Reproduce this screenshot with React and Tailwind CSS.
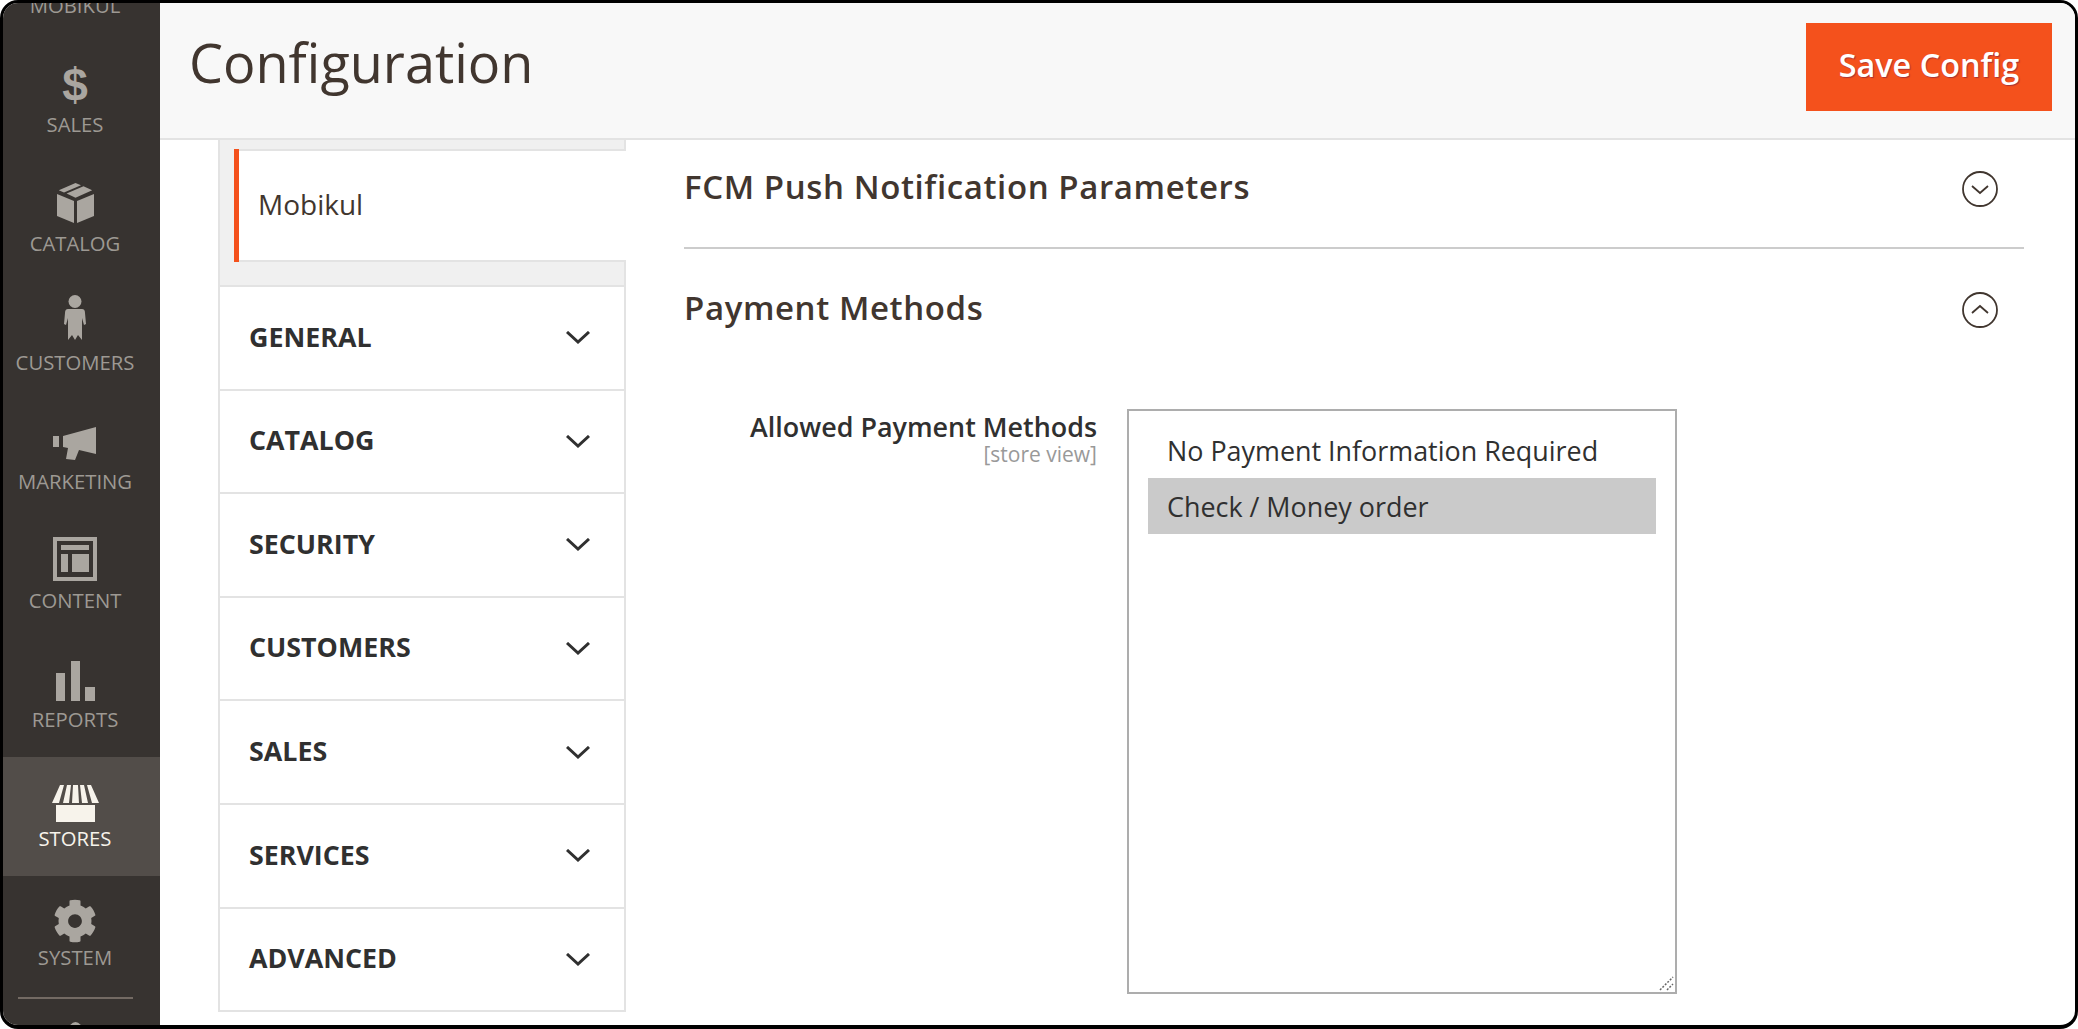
import React from 'react';
import { FaCog } from 'react-icons/fa';

const font = "font-['Open_Sans',sans-serif]";

const BoxIcon = () => (
  <svg width="37" height="40" viewBox="0 0 37 40" fill="currentColor">
    <path d="M0 11 L17 18 V40 L0 33 Z" />
    <path d="M37 11 L20 18 V40 L37 33 Z" />
    <path d="M18.5 0 L24 2.2 L7 9.4 L1.8 7.2 Z" />
    <path d="M26.5 3.2 L35.2 7.2 L18.5 14.8 L9.6 10.6 Z" />
  </svg>
);

const PersonIcon = () => (
  <svg width="22" height="46" viewBox="0 0 22 46" fill="currentColor">
    <circle cx="11" cy="6.5" r="6.5" />
    <path d="M4 14 H18 Q21 14 21 18 L22 29 L20 30 L18 23 L18 45 L14 40 L11 45 L8 40 L4 45 L4 23 L2 30 L0 29 L1 18 Q1 14 4 14 Z" />
  </svg>
);

const MegaphoneIcon = () => (
  <svg width="44" height="35" viewBox="0 0 44 35" fill="currentColor">
    <path d="M0 9 H6 V20 H0 Z" />
    <path d="M10 9 L43 0 V27 L26 23 L22 33 L13 32 L15 21 L10 20 Z" />
  </svg>
);

const ContentIcon = () => (
  <svg width="44" height="44" viewBox="0 0 44 44" fill="currentColor">
    <path fillRule="evenodd" d="M0 0 H44 V44 H0 Z M4 4 V40 H40 V4 Z" />
    <path d="M8 8 H36 V13 H8 Z M8 17 H15 V35 H8 Z M19 17 H36 V35 H19 Z" />
  </svg>
);

const ReportsIcon = () => (
  <svg width="39" height="40" viewBox="0 0 39 40" fill="currentColor">
    <path d="M0 12 H9 V40 H0 Z M15 0 H24 V40 H15 Z M29 26 H39 V40 H29 Z" />
  </svg>
);

const StoresIcon = () => (
  <svg width="47" height="38" viewBox="0 0 47 38" fill="currentColor">
    <path d="M4 20 H43 V37 H4 Z" />
    <path d="M8 0 H12 L7 18 H0 Z M15 0 H19 L17 18 H11 Z M21 0 H26 L27 18 H20 Z M28 0 H32 L36 18 H30 Z M35 0 H39 L47 18 H40 Z" />
  </svg>
);

const sideItems = [
  { label: 'MOBIKUL', icon: null, pad: 'pb-0' },
  { label: 'SALES', icon: <span className="font-['Liberation_Sans',sans-serif] text-[46px] leading-[46px] font-bold">$</span>, pad: 'pb-[3px]' },
  { label: 'CATALOG', icon: <BoxIcon />, pad: 'pb-[7px]' },
  { label: 'CUSTOMERS', icon: <PersonIcon />, pad: 'pb-[8px]' },
  { label: 'MARKETING', icon: <MegaphoneIcon />, pad: 'pb-[6px]' },
  { label: 'CONTENT', icon: <ContentIcon />, pad: 'pb-[6px]' },
  { label: 'REPORTS', icon: <ReportsIcon />, pad: 'pb-[5px]' },
  { label: 'STORES', icon: <StoresIcon />, pad: 'pb-[2px]', active: true },
  { label: 'SYSTEM', icon: <FaCog size={44} />, pad: 'pb-[1px]' },
];

const sections = ['GENERAL', 'CATALOG', 'SECURITY', 'CUSTOMERS', 'SALES', 'SERVICES', 'ADVANCED'];

const Chevron = () => (
  <svg width="24" height="13" viewBox="0 0 24 13" fill="none" stroke="#303030" strokeWidth="3">
    <path d="M1 1 L12 11 L23 1" />
  </svg>
);

const CircleToggle = ({ open }) => (
  <svg width="38" height="38" viewBox="0 0 38 38" fill="none" stroke="#41362f" strokeWidth="1.8">
    <circle cx="19" cy="19" r="17" />
    <path d={open ? 'M11 22 L19 15 L27 22' : 'M11 16 L19 23 L27 16'} />
  </svg>
);

const SideItem = ({ item }) => (
  <div className={`h-[119px] shrink-0 flex flex-col items-center pr-[13px] ${item.active ? 'bg-[#524d49] text-[#f7f3eb]' : 'text-[#aaa6a0]'}`}>
    <div className={`h-[62px] mt-[6px] flex items-end justify-center ${item.pad}`}>{item.icon}</div>
    <div className={`text-[20.3px] leading-[26px] ${item.active ? '' : 'text-[#9d9993]'}`}>{item.label}</div>
  </div>
);

export default function App() {
  return (
    <div className={`${font} w-[2078px] h-[1029px] bg-white`}>
      <div className="w-full h-full border-[3px] border-b-4 border-black rounded-[18px] overflow-hidden flex">
        <aside className="w-[157px] shrink-0 bg-[#373330] flex flex-col overflow-hidden">
          <div className="-mt-[79px] flex flex-col">
            {sideItems.map((item) => <SideItem key={item.label} item={item} />)}
          </div>
          <div className="mt-[2px] ml-[15px] mr-[27px] h-[2px] bg-[#736a63] shrink-0" />
          <svg className="ml-[65px] mt-[21px] shrink-0 text-[#aaa6a0]" width="15" height="8" viewBox="0 0 15 8" fill="currentColor">
            <path d="M0 8 Q7.5 -4 15 8 Z" />
          </svg>
        </aside>

        <div className="flex-1 flex flex-col min-w-0">
          <header className="h-[137px] shrink-0 bg-[#f8f8f8] border-b-2 border-[#e3e3e3] flex items-center justify-between pl-[29px] pr-[23px]">
            <h1 className="text-[54px] leading-none text-[#41362f] -mt-[18px]">Configuration</h1>
            <button className="w-[246px] h-[88px] pb-[5px] bg-[#f4511c] text-white text-[32.4px] font-semibold -mt-[7px] [text-shadow:1px_1px_1px_#a33]">Save Config</button>
          </header>

          <main className="flex-1 flex min-h-0 overflow-hidden">
            <nav className="ml-[58px] w-[408px] shrink-0 flex flex-col">
              <div className="bg-[#f0f0f0] border-x-2 border-[#e3e3e3] h-[147px] pt-[9px] pl-[14px] shrink-0 border-b-2">
                <div className="-mr-[2px] h-[113px] bg-white border-l-[5px] border-[#f4511c] relative flex items-center pl-[19px] text-[28px] text-[#41362f]">
                  <div className="absolute left-0 right-0 top-0 h-[2px] bg-[#e3e3e3]" />
                  <div className="absolute left-0 right-0 bottom-0 h-[2px] bg-[#e3e3e3]" />
                  <span className="-mt-[4px]">Mobikul</span>
                </div>
              </div>
              {sections.map((name) => (
                <div key={name} className="h-[103.6px] shrink-0 border-x-2 border-b-2 border-[#e3e3e3] flex items-center justify-between pl-[29px] pr-[34px]">
                  <span className="text-[26.8px] font-bold text-[#303030] -mt-[2px]">{name}</span>
                  <Chevron />
                </div>
              ))}
            </nav>

            <section className="ml-[58px] w-[1340px] shrink-0 flex flex-col">
              <div className="h-[109px] shrink-0 border-b-2 border-[#cccccc] flex items-center justify-between pr-[25px]">
                <h2 className="text-[33px] font-semibold tracking-[0.6px] text-[#41362f] -mt-[14px]">FCM Push Notification Parameters</h2>
                <div className="-mt-[9px]"><CircleToggle /></div>
              </div>
              <div className="h-[119px] shrink-0 flex items-center justify-between pr-[25px]">
                <h2 className="text-[33px] font-semibold tracking-[0.6px] text-[#41362f] -mt-[2px]">Payment Methods</h2>
                <div className="mt-[3px]"><CircleToggle open /></div>
              </div>
              <div className="flex mt-[41px]">
                <div className="w-[413px] shrink-0 text-right pt-[2px]">
                  <div className="text-[26.9px] leading-[32px] font-semibold text-[#303030]">Allowed Payment Methods</div>
                  <div className="text-[21px] leading-[22px] text-[#999999]">[store view]</div>
                </div>
                <div className="relative ml-[30px] w-[550px] h-[585px] border-2 border-[#adadad] bg-white pl-[19px] pr-[19px] pt-[11px]">
                  <div className="h-[56px] flex items-center pl-[19px] pt-[2px] text-[26.9px] text-[#303030]">No Payment Information Required</div>
                  <div className="h-[56px] flex items-center pl-[19px] pt-[2px] text-[26.9px] text-[#303030] bg-[#cacaca]">Check / Money order</div>
                  <svg className="absolute right-[1px] bottom-[1px]" width="15" height="15" viewBox="0 0 15 15" stroke="#666666" strokeWidth="1.5" strokeDasharray="2 1.5">
                    <path d="M1 14 L14 1 M8 14 L14 8" />
                  </svg>
                </div>
              </div>
            </section>
          </main>
        </div>
      </div>
    </div>
  );
}
